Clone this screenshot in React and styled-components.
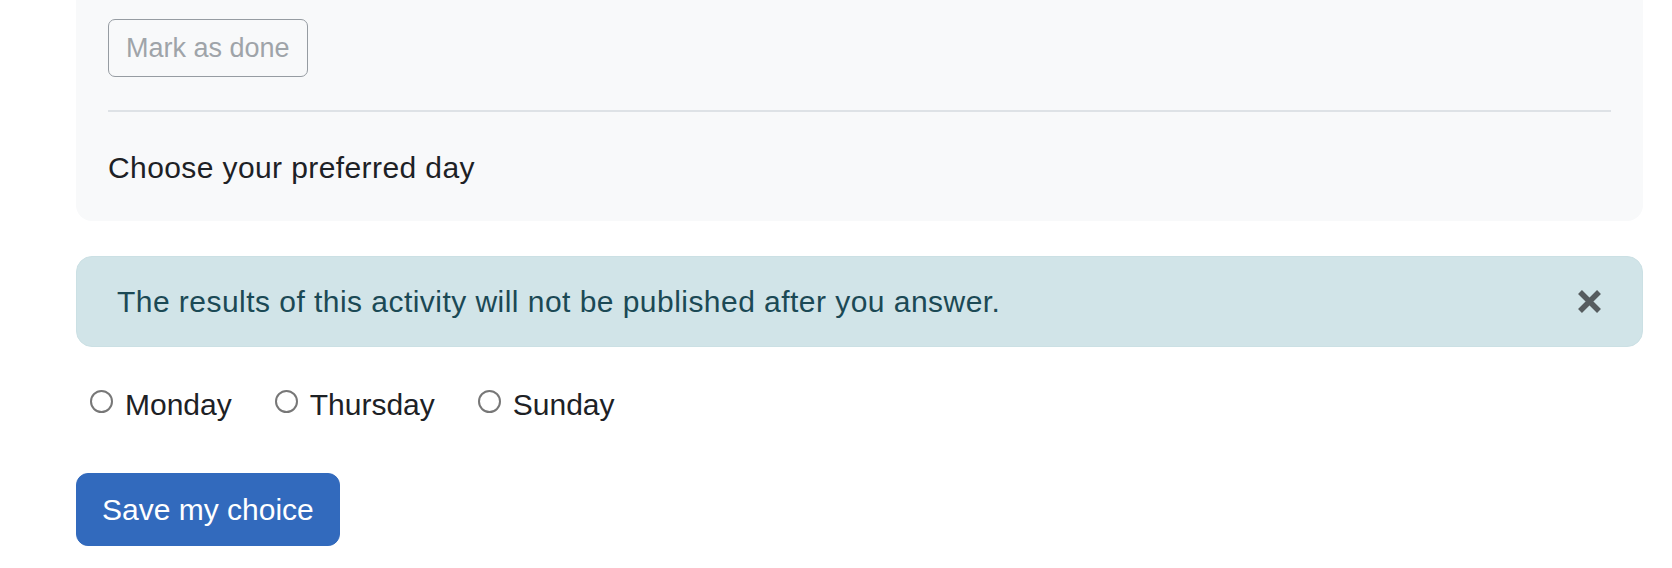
import React, { useState } from "react";
import styled, { createGlobalStyle } from "styled-components";

const days = ["Monday", "Thursday", "Sunday"];

const GlobalStyle = createGlobalStyle`
  body {
    margin: 0;
    background: #fff;
    color: #1d2125;
    font-family: "Liberation Sans", Arial, sans-serif;
  }
`;

const Page = styled.div`
  padding: 0 29px 0 76px;
`;

const ActivityCard = styled.div`
  background: #f8f9fa;
  border-radius: 0 0 16px 16px;
  padding: 19px 32px 31px;
`;

const MarkButton = styled.button`
  display: inline-block;
  font-family: inherit;
  font-size: 27px;
  line-height: 40px;
  padding: 8px 17px;
  color: #9fa4a9;
  background: transparent;
  border: 1px solid #969ca2;
  border-radius: 7px;
  cursor: pointer;
`;

const Divider = styled.hr`
  margin: 33px 0;
  border: 0;
  height: 2px;
  background: #dee2e6;
`;

const Intro = styled.p`
  margin: 0;
  font-size: 30px;
  line-height: 45px;
  letter-spacing: 0.4px;
`;

const Alert = styled.div`
  margin-top: 35px;
  display: flex;
  align-items: center;
  justify-content: space-between;
  padding: 22px 40px;
  background: #d1e4e8;
  border: 1px solid #cbe0e4;
  border-radius: 16px;
  color: #1b4955;
  font-size: 30px;
  line-height: 45px;
  letter-spacing: 0.46px;
`;

const CloseButton = styled.button`
  display: flex;
  padding: 0;
  border: 0;
  background: transparent;
  cursor: pointer;
`;

const Choices = styled.div`
  margin-top: 35px;
  padding-left: 14px;
  display: flex;
  gap: 43px;
`;

const Choice = styled.label`
  display: flex;
  align-items: center;
  gap: 12px;
  font-size: 30px;
  line-height: 45px;
  cursor: pointer;
`;

const Radio = styled.input`
  appearance: none;
  margin: 0 0 7px;
  width: 23px;
  height: 23px;
  border: 2px solid #777;
  border-radius: 50%;
  background: #fff;
  &:checked {
    border-color: #326abd;
    box-shadow: inset 0 0 0 5px #fff;
    background: #326abd;
  }
`;

const SaveButton = styled.button`
  margin-top: 46px;
  font-family: inherit;
  font-size: 30px;
  line-height: 45px;
  padding: 13px 25px;
  color: #fff;
  background: #326abd;
  border: 1px solid #326abd;
  border-radius: 12px;
  cursor: pointer;
`;

const App = () => {
  const [day, setDay] = useState("");
  const [showAlert, setShowAlert] = useState(true);

  return (
    <Page>
      <GlobalStyle />
      <ActivityCard>
        <MarkButton type="button">Mark as done</MarkButton>
        <Divider />
        <Intro>Choose your preferred day</Intro>
      </ActivityCard>

      {showAlert && (
        <Alert role="alert">
          <span>The results of this activity will not be published after you answer.</span>
          <CloseButton type="button" aria-label="Close" onClick={() => setShowAlert(false)}>
            <svg width="25" height="25" viewBox="0 0 25 25">
              <path
                d="M3 3L22 22M22 3L3 22"
                stroke="#565c5f"
                strokeWidth="5.5"
                strokeLinecap="butt"
              />
            </svg>
          </CloseButton>
        </Alert>
      )}

      <Choices>
        {days.map((d) => (
          <Choice key={d}>
            <Radio
              type="radio"
              name="day"
              value={d}
              checked={day === d}
              onChange={() => setDay(d)}
            />
            {d}
          </Choice>
        ))}
      </Choices>

      <SaveButton type="button">Save my choice</SaveButton>
    </Page>
  );
};

export default App;
